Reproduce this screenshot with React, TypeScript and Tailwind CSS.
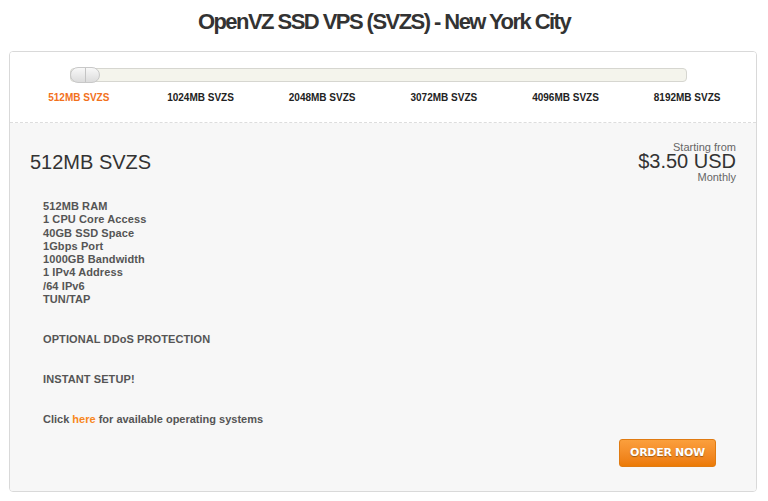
const plans = ['512MB SVZS', '1024MB SVZS', '2048MB SVZS', '3072MB SVZS', '4096MB SVZS', '8192MB SVZS']

const features = [
  '512MB RAM',
  '1 CPU Core Access',
  '40GB SSD Space',
  '1Gbps Port',
  '1000GB Bandwidth',
  '1 IPv4 Address',
  '/64 IPv6',
  'TUN/TAP',
]

export default function App() {
  return (
    <div className="w-[768px] h-[501px] bg-white pt-[9px] font-['Liberation_Sans',Arial,sans-serif]">
      <h1 className="text-center text-[22px] leading-[26px] font-bold tracking-[-1.55px] text-[#333]">
        OpenVZ SSD VPS (SVZS) - New York City
      </h1>

      <div className="mt-[16px] ml-[9px] w-[748px] h-[441px] border border-[#d9d9d9] rounded-[4px] overflow-hidden flex flex-col">
        {/* slider */}
        <div className="bg-white px-[8px] pt-[16px] h-[71px] border-b border-dashed border-[#dddddd]">
          <div className="relative ml-[52px] mr-[61px] h-[14px] rounded-[4px] bg-[#f4f4ec] border border-[#d6d6d0]">
            <div className="absolute left-[-1px] top-[-2px] w-[30px] h-[16px] rounded-full border border-[#c8c8c8] bg-gradient-to-b from-[#f8f8f8] to-[#dcdcdc] flex justify-center">
              <div className="w-px h-full bg-[#c4c4c4]" />
            </div>
          </div>
          <div className="grid grid-cols-6 mt-[10px]">
            {plans.map((p, i) => (
              <div
                key={p}
                className={`text-center text-[10px] leading-[12px] font-bold ${i === 0 ? 'text-[#f2711c]' : 'text-[#222]'}`}
              >
                {p}
              </div>
            ))}
          </div>
        </div>

        {/* details */}
        <div className="flex-1 bg-[#f7f7f7] pl-[20px] pr-[20px] pt-[18px]">
          <div className="flex justify-between">
            <div className="mt-[9px] text-[20px] leading-[24px] text-[#333]">512MB SVZS</div>
            <div className="text-right mt-px">
              <div className="text-[11px] leading-[10px] text-[#666]">Starting from</div>
              <div className="text-[20px] leading-[18px] text-[#333]">$3.50 USD</div>
              <div className="mt-px text-[11px] leading-[12px] text-[#666]">Monthly</div>
            </div>
          </div>

          <div className="pl-[13px] mt-[17px] text-[11px] leading-[13.3px] font-bold text-[#555] tracking-[0.1px]">
            {features.map((f) => (
              <div key={f}>{f}</div>
            ))}
            <div className="mt-[26.7px]">OPTIONAL DDoS PROTECTION</div>
            <div className="mt-[26.7px]">INSTANT SETUP!</div>
            <div className="mt-[26.7px] tracking-normal">
              Click <span className="text-[#f7871e]">here</span> for available operating systems
            </div>
          </div>

          <div className="flex justify-end pr-[20px] mt-[13px]">
            <button className="w-[97px] h-[28px] rounded-[3px] border border-[#e07b12] bg-gradient-to-b from-[#fb9f3c] to-[#ec7a04] text-white text-[11px] font-bold [text-shadow:0_1px_1px_rgba(0,0,0,0.35)] font-['DejaVu_Sans',sans-serif] tracking-[-0.3px]">
              ORDER NOW
            </button>
          </div>
        </div>
      </div>
    </div>
  )
}
